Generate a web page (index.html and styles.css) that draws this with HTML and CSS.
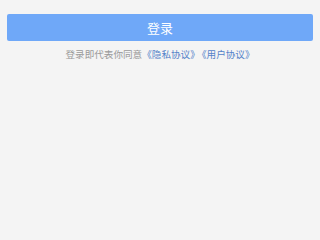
FILE: index.html
```html
<!DOCTYPE html>
<html lang="zh">
<head>
<meta charset="utf-8">
<link rel="stylesheet" href="styles.css">
</head>
<body>
<div class="page">
  <button class="login-btn">登录</button>
  <p class="agree">登录即代表你同意<a class="link">《隐私协议》</a><a class="link link-next">《用户协议》</a></p>
</div>
</body>
</html>
```
FILE: styles.css
```css
html, body {
  margin: 0;
  padding: 0;
  background: #f4f4f4;
  height: 100%;
}
.page {
  padding: 14px 7px 0;
  font-family: "Noto Sans CJK SC", sans-serif;
}
.login-btn {
  display: block;
  width: 100%;
  height: 27px;
  border: 0;
  border-radius: 2px;
  background: #6fa8f8;
  color: #ffffff;
  font-family: "Noto Sans CJK SC", sans-serif;
  font-size: 13px;
  padding: 0;
  line-height: 27px;
}
.agree {
  margin: 6px 0 0;
  text-align: center;
  font-size: 9.6px;
  line-height: 14px;
  color: #999999;
}
.link {
  color: #5583c9;
}
.link-next {
  margin-left: 2px;
}
```
